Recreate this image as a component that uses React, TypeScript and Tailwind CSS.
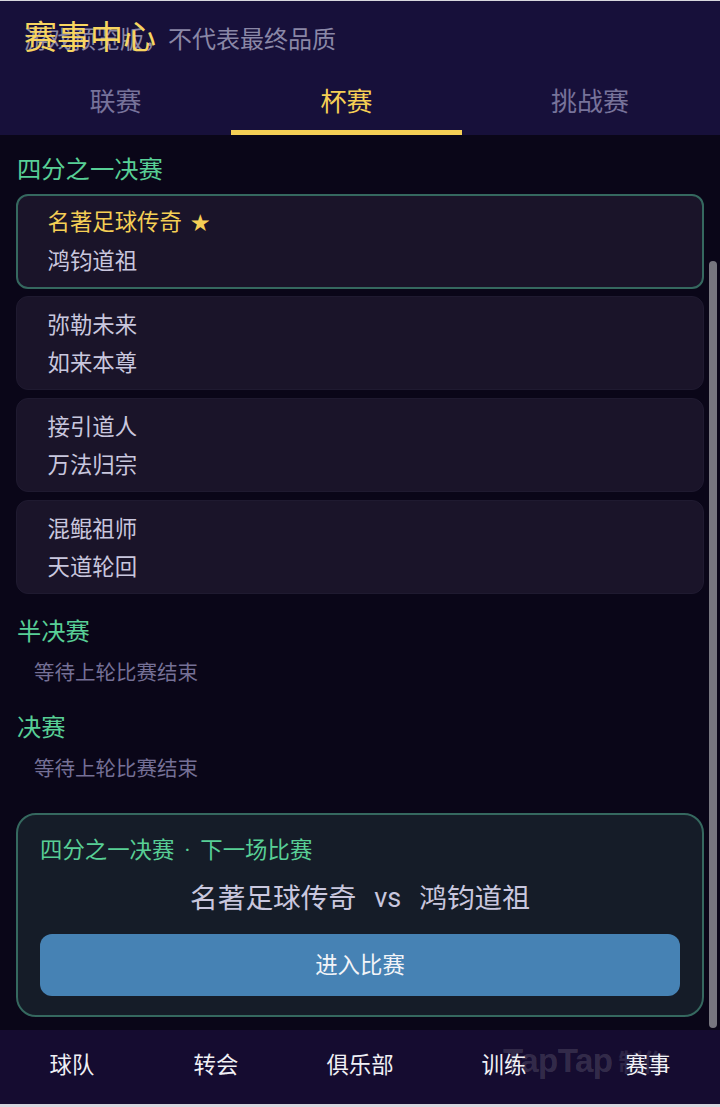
const FONT = "font-['Noto_Sans_CJK_SC','Noto_Sans',sans-serif]";

const MATCHES = [
  { home: '名著足球传奇', away: '鸿钧道祖', mine: true },
  { home: '弥勒未来', away: '如来本尊', mine: false },
  { home: '接引道人', away: '万法归宗', mine: false },
  { home: '混鲲祖师', away: '天道轮回', mine: false },
];

const NAV = ['球队', '转会', '俱乐部', '训练', '赛事'];

function MatchCard({ home, away, mine }: { home: string; away: string; mine: boolean }) {
  return (
    <div
      className={
        mine
          ? 'h-[95px] rounded-xl border-2 border-[#35685f] bg-[#1a1429] pl-[29.5px] pt-[6px] mb-[7px]'
          : 'h-[94px] rounded-xl border border-[#1f1a30] bg-[#1a1429] pl-[30.5px] pt-[7px] mb-[8px]'
      }
    >
      <div className={mine ? 'text-[22.4px] leading-[37px] text-[#f5cf55]' : 'text-[22.4px] leading-[38px] text-[#c9c7de]'}>
        {home}
        {mine && <span className="ml-[9px] text-[19px]">★</span>}
      </div>
      <div className="text-[22.4px] leading-[38px] text-[#c9c7de]">{away}</div>
    </div>
  );
}

function Pending({ title }: { title: string }) {
  return (
    <div>
      <div className="pl-[1px] text-[24.3px] leading-[36px] text-[#58cf96]">{title}</div>
      <div className="mt-[5px] pl-[18px] text-[20.5px] leading-[36px] text-[#757096]">等待上轮比赛结束</div>
    </div>
  );
}

export default function App() {
  return (
    <div className={`${FONT} relative flex h-[1107px] w-[720px] flex-col overflow-hidden bg-[#d8d8de]`}>
      {/* Header */}
      <div className="mt-[1px] bg-[#17103a]">
        <div className="relative h-[75px] pl-[24px] pt-[19px]">
          <div className="text-[24px] leading-[36px] text-[#8a87a6]">游戏预览版，不代表最终品质</div>
          <div className="absolute left-[24px] top-[12px] text-[33px] leading-[44px] text-[#f7d560]">赛事中心</div>
        </div>
        <div className="grid h-[59px] grid-cols-[231px_231px_1fr] text-center text-[26px]">
          <div className="pt-[5px] leading-[38px] text-[#77739a]">联赛</div>
          <div className="border-b-[5px] border-[#f5cf55] pt-[5px] leading-[38px] text-[#f5cf55]">杯赛</div>
          <div className="pt-[5px] pr-[2px] leading-[38px] text-[#77739a]">挑战赛</div>
        </div>
      </div>

      {/* Scrollable content */}
      <div className="relative flex-1 bg-[#0a0618] px-[16px] pt-[15px]">
        <div className="pl-[1px] text-[24.3px] leading-[36px] text-[#58cf96]">四分之一决赛</div>
        <div className="mt-[8px]">
          {MATCHES.map((m) => (
            <MatchCard key={m.away} {...m} />
          ))}
        </div>
        <div className="mt-[18px] flex flex-col gap-[19px]">
          <Pending title="半决赛" />
          <Pending title="决赛" />
        </div>

        {/* Next match card */}
        <div className="mt-[28px] h-[204px] rounded-[20px] border-2 border-[#35685f] bg-[#151c28] px-[22px] pt-[15px]">
          <div className="h-[36px] text-[22.4px] leading-[36px] text-[#58cf96]">
            四分之一决赛
            <span className="inline-block w-[26px] text-center font-['Roboto',sans-serif]">·</span>
            下一场比赛
          </div>
          <div className="mt-[7px] flex h-[46px] justify-center gap-[18px] text-[27.7px] leading-[46px] text-[#c9c7de]">
            <span>名著足球传奇</span>
            <span className="mt-[2px] font-['Roboto',sans-serif] text-[27px]">vs</span>
            <span>鸿钧道祖</span>
          </div>
          <button className="mt-[15px] block h-[62px] w-full rounded-xl bg-[#4682b4] pb-[2px] text-[22.4px] text-[#f2f4f8]">
            进入比赛
          </button>
        </div>

        <div className="absolute right-[3px] top-[126px] h-[767px] w-[8px] rounded-full bg-[#77767f]" />
      </div>

      {/* Bottom nav */}
      <div className="relative grid h-[74px] grid-cols-5 bg-[#150c30] text-center text-[22.4px] leading-[66px] text-[#f0f0f5]">
        {NAV.map((n) => (
          <div key={n}>{n}</div>
        ))}
        <div className="absolute left-[503px] top-[9px] flex items-center gap-[6px]">
          <span className="font-['Liberation_Sans',sans-serif] text-[33px] font-bold leading-[44px] tracking-[-0.5px] text-white/15">TapTap</span>
          <span className="text-[24px] font-bold leading-[44px] text-white/10">制作</span>
        </div>
      </div>
      <div className="h-[3px]" />
    </div>
  );
}
